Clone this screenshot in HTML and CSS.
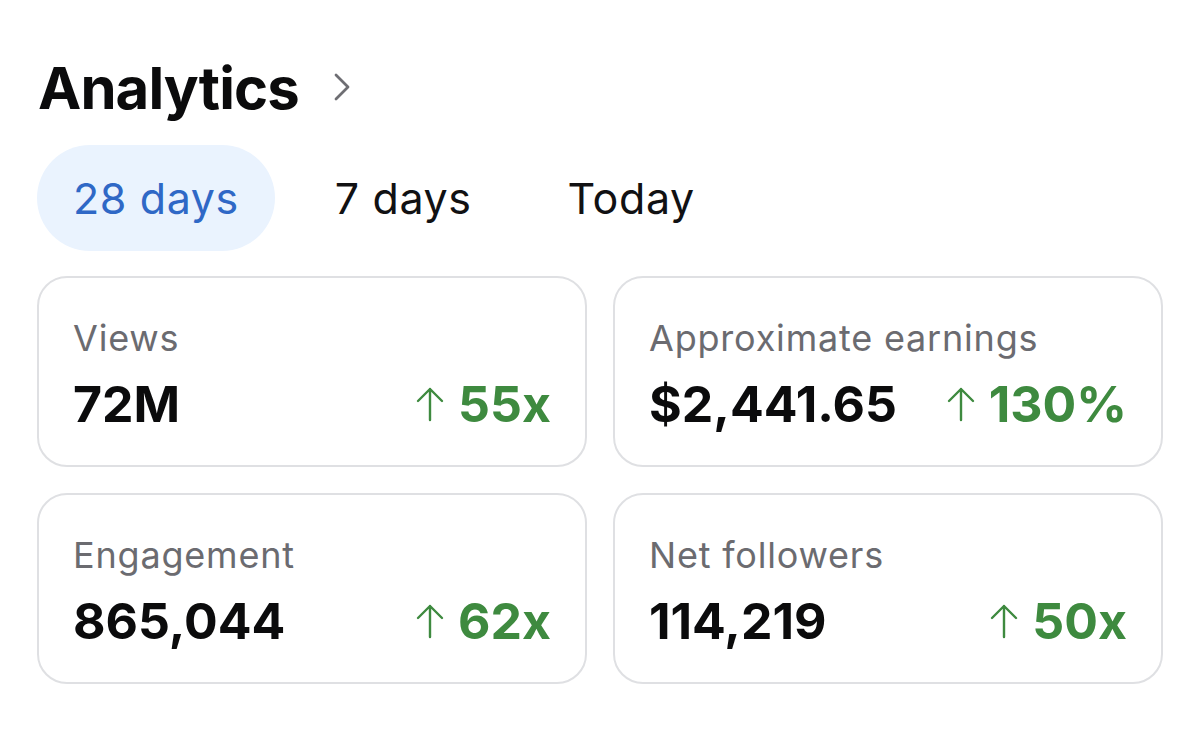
FILE: index.html
```html
<!DOCTYPE html>
<html>
  <head>
    <meta charset="utf-8" />
    <title>Analytics</title>
    <link rel="stylesheet" href="styles.css">
  </head>

  <body>
    <div class="page">
      <div class="header">
        <h1>Analytics</h1>
        <svg class="chevron" width="18" height="30" viewBox="0 0 18 30">
          <path d="M3 3 L15 15 L3 27" fill="none" stroke="#6e6e73" stroke-width="2.8" stroke-linecap="round" stroke-linejoin="round" />
        </svg>
      </div>

      <div class="tabs">
        <span class="tab active">28 days</span>
        <span class="tab">7 days</span>
        <span class="tab">Today</span>
      </div>

      <div class="grid">
        <div class="card">
          <div class="label">Views</div>
          <div class="row">
            <span class="value">72M</span>
            <span class="change">
              <svg class="arrow" width="28" height="36" viewBox="0 0 28 36"><path d="M14 34 V3 M2 15 L14 3 L26 15" fill="none" stroke="#3e8a3f" stroke-width="2.4" stroke-linecap="round" stroke-linejoin="round" /></svg>55x
            </span>
          </div>
        </div>
        <div class="card">
          <div class="label">Approximate earnings</div>
          <div class="row">
            <span class="value">$2,441.65</span>
            <span class="change">
              <svg class="arrow" width="28" height="36" viewBox="0 0 28 36"><path d="M14 34 V3 M2 15 L14 3 L26 15" fill="none" stroke="#3e8a3f" stroke-width="2.4" stroke-linecap="round" stroke-linejoin="round" /></svg>130%
            </span>
          </div>
        </div>
        <div class="card">
          <div class="label">Engagement</div>
          <div class="row">
            <span class="value">865,044</span>
            <span class="change">
              <svg class="arrow" width="28" height="36" viewBox="0 0 28 36"><path d="M14 34 V3 M2 15 L14 3 L26 15" fill="none" stroke="#3e8a3f" stroke-width="2.4" stroke-linecap="round" stroke-linejoin="round" /></svg>62x
            </span>
          </div>
        </div>
        <div class="card">
          <div class="label">Net followers</div>
          <div class="row">
            <span class="value">114,219</span>
            <span class="change">
              <svg class="arrow" width="28" height="36" viewBox="0 0 28 36"><path d="M14 34 V3 M2 15 L14 3 L26 15" fill="none" stroke="#3e8a3f" stroke-width="2.4" stroke-linecap="round" stroke-linejoin="round" /></svg>50x
            </span>
          </div>
        </div>
      </div>
    </div>
  </body>
</html>
```

FILE: styles.css
```css
body {
  margin: 0;
  background: #ffffff;
  font-family: Inter, "Noto Sans", sans-serif;
  color: #0b0b0c;
}
.page {
  padding: 52px 37px 0 37px;
}
.header {
  display: flex;
  align-items: center;
  gap: 34px;
  height: 72px;
}
h1 {
  margin: 0 0 0 1px;
  font-size: 58px;
  font-weight: 700;
  letter-spacing: -0.9px;
  line-height: 72px;
}
.chevron {
  margin-top: -2px;
}
.tabs {
  display: flex;
  gap: 24px;
  margin-top: 21px;
}
.tab {
  display: flex;
  align-items: center;
  height: 106px;
  padding: 0 36px;
  border-radius: 53px;
  font-size: 43px;
  letter-spacing: 0.6px;
  color: #111113;
}
.tab.active {
  background: #eaf3fe;
  color: #2f68c6;
}
.grid {
  display: grid;
  grid-template-columns: 550px 550px;
  gap: 26px;
  margin-top: 25px;
}
.card {
  height: 191px;
  box-sizing: border-box;
  border: 2px solid #dfe0e3;
  border-radius: 30px;
  padding: 38px 34px 0 34px;
}
.label {
  font-size: 36px;
  letter-spacing: 0.8px;
  color: #6b6b70;
  line-height: 44px;
}
.row {
  display: flex;
  justify-content: space-between;
  align-items: center;
  margin-top: 16px;
}
.value {
  font-size: 50px;
  font-weight: 700;
  line-height: 56px;
}
.change {
  display: flex;
  align-items: center;
  gap: 14px;
  font-size: 50px;
  font-weight: 700;
  line-height: 56px;
  color: #3e8a3f;
}
```
